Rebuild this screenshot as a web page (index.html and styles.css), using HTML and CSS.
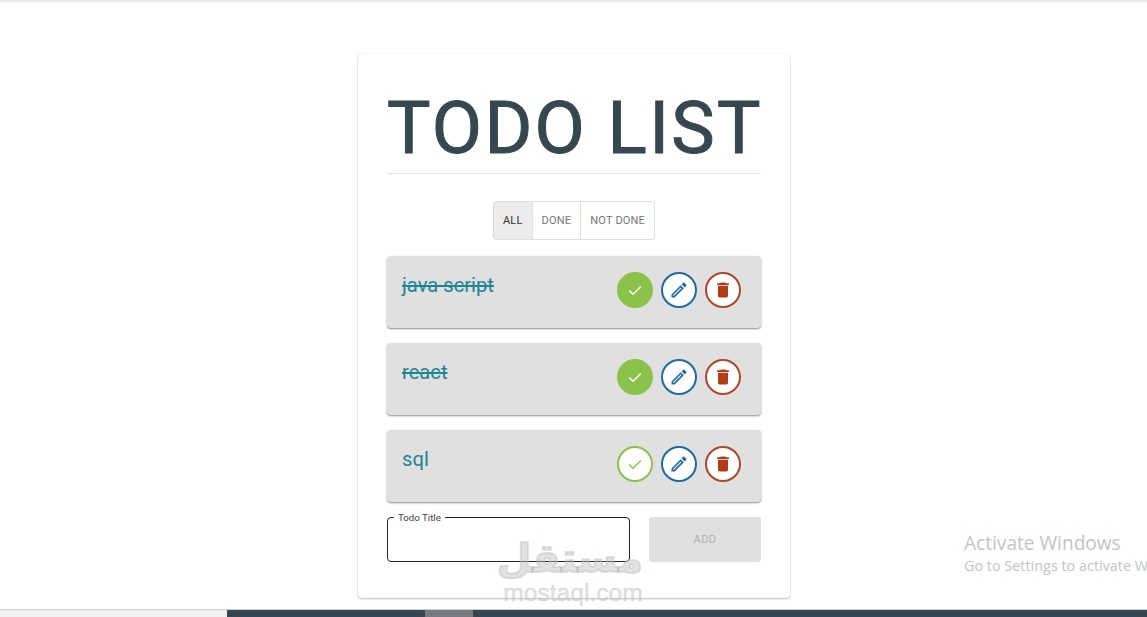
FILE: index.html
```html
<!DOCTYPE html>
<html lang="en">
<head>
    <meta charset="UTF-8">
    <meta name="viewport" content="width=device-width, initial-scale=1.0">
    <title>Todo List</title>
    <link rel="stylesheet" href="styles.css">
</head>
<body>
    <div class="page">
        <main class="stage">
            <section class="card">
                <h1 class="title">TODO LIST</h1>
                <hr class="divider">

                <!-- Filter -->
                <div class="filter">
                    <button class="filter-btn active">ALL</button>
                    <button class="filter-btn">DONE</button>
                    <button class="filter-btn">NOT DONE</button>
                </div>

                <!-- Todos -->
                <div class="todo done">
                    <span class="todo-title">java script</span>
                    <div class="todo-actions">
                        <button class="round check filled"><svg viewBox="0 0 24 24"><path d="M5 12.5l4.6 4.6L19 7.7"/></svg></button>
                        <button class="round edit"><svg viewBox="0 0 24 24"><path d="M3 17.25V21h3.75L17.81 9.94l-3.75-3.75L3 17.25zM5.92 19H5v-.92l9.06-9.06.92.92L5.92 19zM20.71 7.04a1 1 0 0 0 0-1.41l-2.34-2.34a1 1 0 0 0-1.41 0l-1.83 1.83 3.75 3.75 1.83-1.83z"/></svg></button>
                        <button class="round trash"><svg viewBox="0 0 24 24"><path d="M6 19c0 1.1.9 2 2 2h8c1.1 0 2-.9 2-2V7H6v12zM19 4h-3.5l-1-1h-5l-1 1H5v2h14V4z"/></svg></button>
                    </div>
                </div>

                <div class="todo done">
                    <span class="todo-title">react</span>
                    <div class="todo-actions">
                        <button class="round check filled"><svg viewBox="0 0 24 24"><path d="M5 12.5l4.6 4.6L19 7.7"/></svg></button>
                        <button class="round edit"><svg viewBox="0 0 24 24"><path d="M3 17.25V21h3.75L17.81 9.94l-3.75-3.75L3 17.25zM5.92 19H5v-.92l9.06-9.06.92.92L5.92 19zM20.71 7.04a1 1 0 0 0 0-1.41l-2.34-2.34a1 1 0 0 0-1.41 0l-1.83 1.83 3.75 3.75 1.83-1.83z"/></svg></button>
                        <button class="round trash"><svg viewBox="0 0 24 24"><path d="M6 19c0 1.1.9 2 2 2h8c1.1 0 2-.9 2-2V7H6v12zM19 4h-3.5l-1-1h-5l-1 1H5v2h14V4z"/></svg></button>
                    </div>
                </div>

                <div class="todo">
                    <span class="todo-title">sql</span>
                    <div class="todo-actions">
                        <button class="round check"><svg viewBox="0 0 24 24"><path d="M5 12.5l4.6 4.6L19 7.7"/></svg></button>
                        <button class="round edit"><svg viewBox="0 0 24 24"><path d="M3 17.25V21h3.75L17.81 9.94l-3.75-3.75L3 17.25zM5.92 19H5v-.92l9.06-9.06.92.92L5.92 19zM20.71 7.04a1 1 0 0 0 0-1.41l-2.34-2.34a1 1 0 0 0-1.41 0l-1.83 1.83 3.75 3.75 1.83-1.83z"/></svg></button>
                        <button class="round trash"><svg viewBox="0 0 24 24"><path d="M6 19c0 1.1.9 2 2 2h8c1.1 0 2-.9 2-2V7H6v12zM19 4h-3.5l-1-1h-5l-1 1H5v2h14V4z"/></svg></button>
                    </div>
                </div>

                <!-- Add form -->
                <div class="add-row">
                    <fieldset class="field">
                        <legend class="field-label">Todo Title</legend>
                    </fieldset>
                    <button class="add-btn" disabled>ADD</button>
                </div>
            </section>
        </main>

        <div class="scrollbar">
            <div class="scrollbar-start"></div>
            <div class="scrollbar-track"><div class="scrollbar-thumb"></div></div>
        </div>
    </div>

    <!-- Overlays on the photographed screen -->
    <div class="watermark">
        <div class="watermark-ar" dir="rtl" lang="ar">مستقل</div>
        <div class="watermark-en">mostaql.com</div>
    </div>
    <div class="activate">
        <div class="activate-head">Activate Windows</div>
        <div class="activate-sub">Go to Settings to activate Windows.</div>
    </div>
</body>
</html>
```

FILE: styles.css
```css
* {
    box-sizing: border-box;
}

html, body {
    margin: 0;
    height: 100%;
    overflow: hidden;
}

body {
    font-family: Roboto, "Liberation Sans", sans-serif;
    background: #fff;
}

.page {
    height: 617px;
    display: flex;
    flex-direction: column;
    border-top: 2px solid #e8e8e8;
}

.stage {
    flex: 1;
    display: flex;
    justify-content: center;
    padding: 52px 0 0 0;
    border-bottom: 1px solid #cfcfcf;
}

.card {
    width: 432px;
    height: 544px;
    margin-left: 1px;
    padding: 0 29px;
    background: #fff;
    border-radius: 4px;
    box-shadow: 0 1px 2px rgba(0,0,0,0.25), 0 0 2px rgba(0,0,0,0.07);
}

.title {
    margin: 0;
    padding-top: 30px;
    height: 119px;
    font-size: 73px;
    line-height: 88px;
    font-weight: 400;
    letter-spacing: 2.3px;
    color: #37474f;
    white-space: nowrap;
    text-align: center;
    -webkit-text-stroke: 1px #37474f;
}

.divider {
    margin: 0 0 27px 0;
    border: none;
    border-top: 1px solid #e4e4e4;
}

.filter {
    display: flex;
    justify-content: center;
    margin-bottom: 16px;
}

.filter-btn {
    height: 39px;
    padding: 0 9px;
    font-family: inherit;
    font-size: 11px;
    letter-spacing: 0.2px;
    color: #757575;
    background: #fff;
    border: 1px solid #e0e0e0;
    border-left: none;
}

.filter-btn:first-child {
    border-left: 1px solid #d8d8d8;
    border-radius: 4px 0 0 4px;
}

.filter-btn:last-child {
    border-radius: 0 4px 4px 0;
}

.filter-btn.active {
    color: #333;
    background: #ececec;
}

.todo {
    height: 72px;
    width: 374px;
    margin-bottom: 15px;
    padding: 16px 20px 0 15px;
    display: flex;
    justify-content: space-between;
    align-items: flex-start;
    background: #e0e0e0;
    border-radius: 4px;
    box-shadow: 0 1px 2px rgba(0,0,0,0.45);
}

.todo-title {
    font-size: 20.2px;
    line-height: 26px;
    color: #1f8594;
}

.todo.done .todo-title {
    text-decoration: line-through;
}

.todo-actions {
    display: flex;
    gap: 8px;
}

.round {
    width: 36px;
    height: 36px;
    padding: 0;
    display: flex;
    align-items: center;
    justify-content: center;
    background: #fff;
    border: 2px solid;
    border-radius: 50%;
}

.round svg {
    width: 20px;
    height: 20px;
}

.check {
    border-color: #8bc34a;
}

.check svg {
    fill: none;
    stroke: #8bc34a;
    stroke-width: 1.7;
}

.check.filled {
    background: #8bc34a;
}

.check.filled svg {
    stroke: #fff;
}

.edit {
    border-color: #1f6aa5;
}

.edit svg {
    fill: #1f6aa5;
}

.trash {
    border-color: #b0452a;
}

.trash svg {
    fill: #b23c17;
}

.add-row {
    display: flex;
    justify-content: space-between;
    width: 374px;
}

.field {
    width: 243px;
    height: 50px;
    margin: -5px 0 0 0;
    padding: 0 6px;
    border: 1px solid #222;
    border-radius: 4px;
}

.field-label {
    padding: 0 4px;
    font-size: 9.7px;
    line-height: 11px;
    color: #444;
}

.add-btn {
    width: 112px;
    height: 45px;
    font-family: inherit;
    font-size: 11px;
    letter-spacing: 0.4px;
    color: #b0b0b0;
    background: #e0e0e0;
    border: none;
    border-radius: 3px;
}

.scrollbar {
    height: 7px;
    display: flex;
}

.scrollbar-start {
    width: 227px;
    background: #f1f1f1;
}

.scrollbar-track {
    flex: 1;
    background: #36454f;
    padding-left: 198px;
}

.scrollbar-thumb {
    width: 48px;
    height: 100%;
    background: #777c82;
}

.watermark {
    position: absolute;
    left: 503px;
    top: 535px;
    width: 140px;
    text-align: center;
    color: rgba(190,190,190,0.45);
    pointer-events: none;
}

.watermark-ar {
    font-family: "DejaVu Sans", sans-serif;
    font-weight: bold;
    font-size: 40px;
    line-height: 46px;
    -webkit-text-stroke: 2px rgba(190,190,190,0.45);
}

.watermark-en {
    font-family: "Liberation Sans", sans-serif;
    font-size: 24.6px;
    line-height: 24px;
    white-space: nowrap;
    -webkit-text-stroke: 0.6px rgba(190,190,190,0.45);
}

.activate {
    position: absolute;
    left: 964px;
    top: 531px;
    white-space: nowrap;
    font-family: "Open Sans", sans-serif;
    color: #c4c4c4;
}

.activate-head {
    font-size: 19.1px;
    line-height: 25px;
}

.activate-sub {
    font-size: 14.4px;
    line-height: 20px;
}
```
